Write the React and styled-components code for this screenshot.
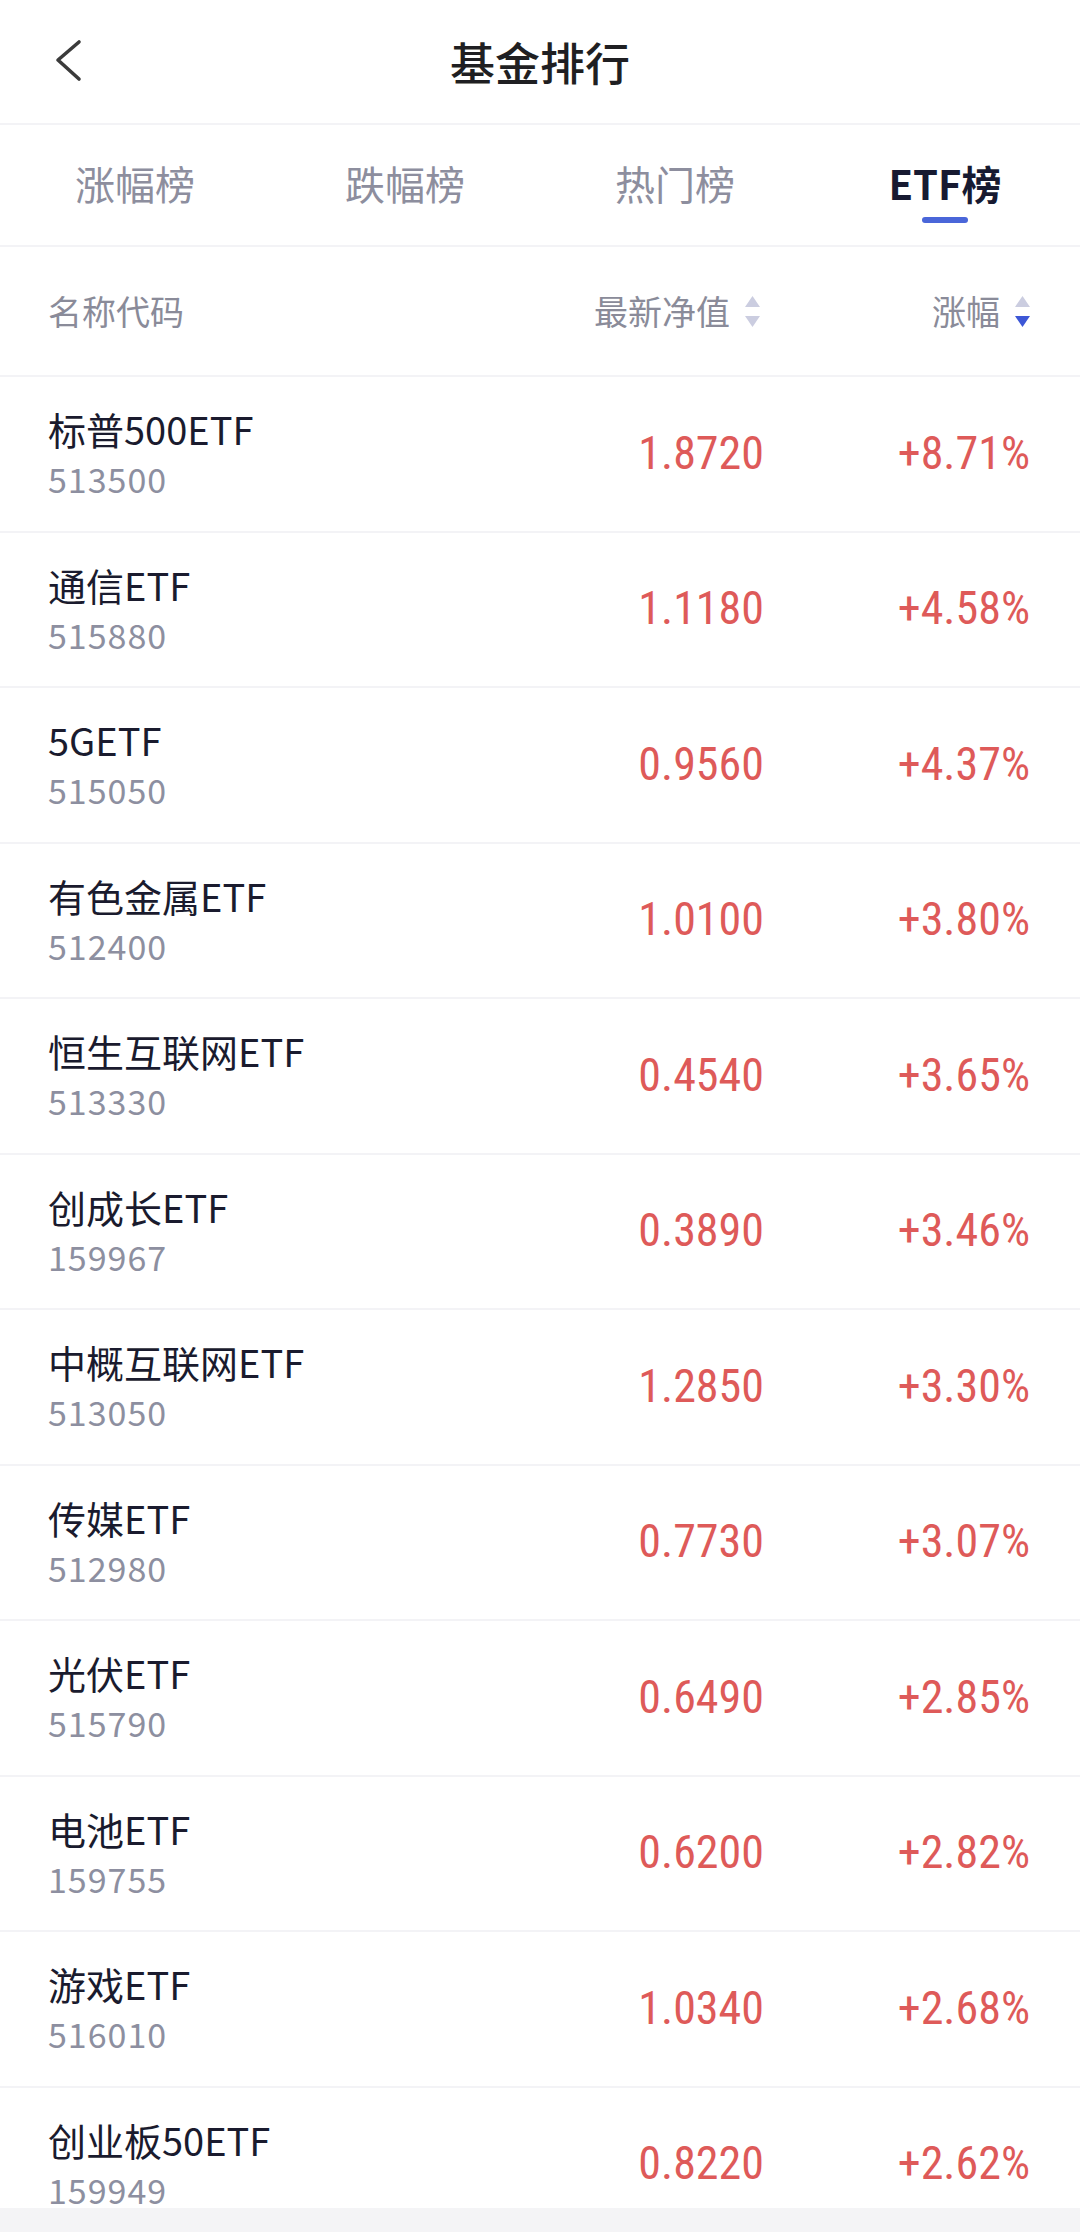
import styled, { createGlobalStyle } from "styled-components";

const funds = [
  { name: "标普500ETF", code: "513500", nav: "1.8720", change: "+8.71%" },
  { name: "通信ETF", code: "515880", nav: "1.1180", change: "+4.58%" },
  { name: "5GETF", code: "515050", nav: "0.9560", change: "+4.37%" },
  { name: "有色金属ETF", code: "512400", nav: "1.0100", change: "+3.80%" },
  { name: "恒生互联网ETF", code: "513330", nav: "0.4540", change: "+3.65%" },
  { name: "创成长ETF", code: "159967", nav: "0.3890", change: "+3.46%" },
  { name: "中概互联网ETF", code: "513050", nav: "1.2850", change: "+3.30%" },
  { name: "传媒ETF", code: "512980", nav: "0.7730", change: "+3.07%" },
  { name: "光伏ETF", code: "515790", nav: "0.6490", change: "+2.85%" },
  { name: "电池ETF", code: "159755", nav: "0.6200", change: "+2.82%" },
  { name: "游戏ETF", code: "516010", nav: "1.0340", change: "+2.68%" },
  { name: "创业板50ETF", code: "159949", nav: "0.8220", change: "+2.62%" },
];

const tabs = ["涨幅榜", "跌幅榜", "热门榜", "ETF榜"];

const GlobalStyle = createGlobalStyle`
  html, body {
    margin: 0;
    padding: 0;
    background: #fff;
  }
  body {
    font-family: "Noto Sans CJK SC", "Noto Sans", sans-serif;
  }
`;

const SortIcon = ({ active }) => (
  <svg width="15" height="31" viewBox="0 0 15 31">
    <polygon points="7.5,0 15,11 0,11" fill="#cbcde0" />
    <polygon points="0,20 15,20 7.5,31" fill={active ? "#3d57d6" : "#cbcde0"} />
  </svg>
);

const App = () => {
  return (
    <>
      <GlobalStyle />
      <Page>
        <NavBar>
          <BackButton>
            <svg width="30" height="44" viewBox="0 0 30 44">
              <polyline
                points="25,3 4,21 25,40"
                fill="none"
                stroke="#3b3b3b"
                strokeWidth="3.6"
                strokeLinecap="round"
                strokeLinejoin="round"
              />
            </svg>
          </BackButton>
          <Title>基金排行</Title>
          <span />
        </NavBar>

        <TabBar>
          {tabs.map((t, i) => (
            <Tab key={t} $active={i === tabs.length - 1}>
              {t}
            </Tab>
          ))}
        </TabBar>

        <HeaderRow>
          <HeadCell>名称代码</HeadCell>
          <HeadCell $right $inset={4}>
            最新净值
            <SortIcon />
          </HeadCell>
          <HeadCell $right>
            涨幅
            <SortIcon active />
          </HeadCell>
        </HeaderRow>

        <List>
          {funds.map((f) => (
            <Row key={f.code}>
              <NameCell>
                <FundName>{f.name}</FundName>
                <FundCode>{f.code}</FundCode>
              </NameCell>
              <Value>{f.nav}</Value>
              <Value>{f.change}</Value>
            </Row>
          ))}
        </List>

        <Footer />
      </Page>
    </>
  );
};

const Page = styled.div`
  width: 1080px;
  height: 2232px;
  display: flex;
  flex-direction: column;
  background: #fff;
  overflow: hidden;
`;

const NavBar = styled.div`
  height: 125px;
  box-sizing: border-box;
  border-bottom: 2px solid #f3f3f6;
  display: grid;
  grid-template-columns: 140px 1fr 140px;
  align-items: center;
  flex-shrink: 0;
`;

const BackButton = styled.div`
  display: flex;
  align-items: center;
  padding-left: 54px;
  padding-bottom: 2px;
`;

const Title = styled.div`
  text-align: center;
  font-size: 45px;
  font-weight: 500;
  color: #1f1f22;
  line-height: 1;
`;

const TabBar = styled.div`
  height: 122px;
  box-sizing: border-box;
  border-bottom: 2px solid #f3f3f6;
  display: grid;
  grid-template-columns: repeat(4, 1fr);
  flex-shrink: 0;
`;

const Tab = styled.div`
  position: relative;
  display: flex;
  align-items: center;
  justify-content: center;
  padding-bottom: 4px;
  font-size: 40px;
  font-weight: ${(p) => (p.$active ? 700 : 400)};
  color: ${(p) => (p.$active ? "#171a31" : "#8d8e9e")};

  &::after {
    content: "";
    display: ${(p) => (p.$active ? "block" : "none")};
    position: absolute;
    left: 50%;
    top: 92px;
    width: 46px;
    height: 6px;
    margin-left: -23px;
    border-radius: 3px;
    background: #4a66d9;
  }
`;

const columns = `
  display: grid;
  grid-template-columns: 1fr 270px 266px;
  align-items: center;
  padding: 0 50px 0 48px;
  box-sizing: border-box;
  border-bottom: 2px solid #f3f3f6;
`;

const HeaderRow = styled.div`
  ${columns}
  height: 130px;
  flex-shrink: 0;
`;

const HeadCell = styled.div`
  display: flex;
  align-items: center;
  justify-content: ${(p) => (p.$right ? "flex-end" : "flex-start")};
  gap: 15px;
  font-size: 34px;
  color: #8a8b99;
  line-height: 1;
  padding-right: ${(p) => p.$inset || 0}px;
`;

const List = styled.div`
  flex: 1;
  overflow: hidden;
`;

const Row = styled.div`
  ${columns}
  height: 155.5px;
  align-items: stretch;
`;

const NameCell = styled.div`
  display: flex;
  flex-direction: column;
  padding-top: 27px;
`;

const FundName = styled.div`
  font-size: 38px;
  line-height: 50px;
  color: #1a1b2e;
`;

const FundCode = styled.div`
  margin-top: 7px;
  font-size: 34px;
  line-height: 36px;
  letter-spacing: 1px;
  color: #8d8fa0;
`;

const Value = styled.div`
  display: flex;
  align-items: center;
  justify-content: flex-end;
  font-family: "Liberation Sans Narrow", "Roboto Condensed", Roboto, sans-serif;
  font-size: 46px;
  color: #de5a59;
  padding-bottom: 2px;
`;

const Footer = styled.div`
  height: 24px;
  flex-shrink: 0;
  background: #f4f4f6;
`;

export default App;
